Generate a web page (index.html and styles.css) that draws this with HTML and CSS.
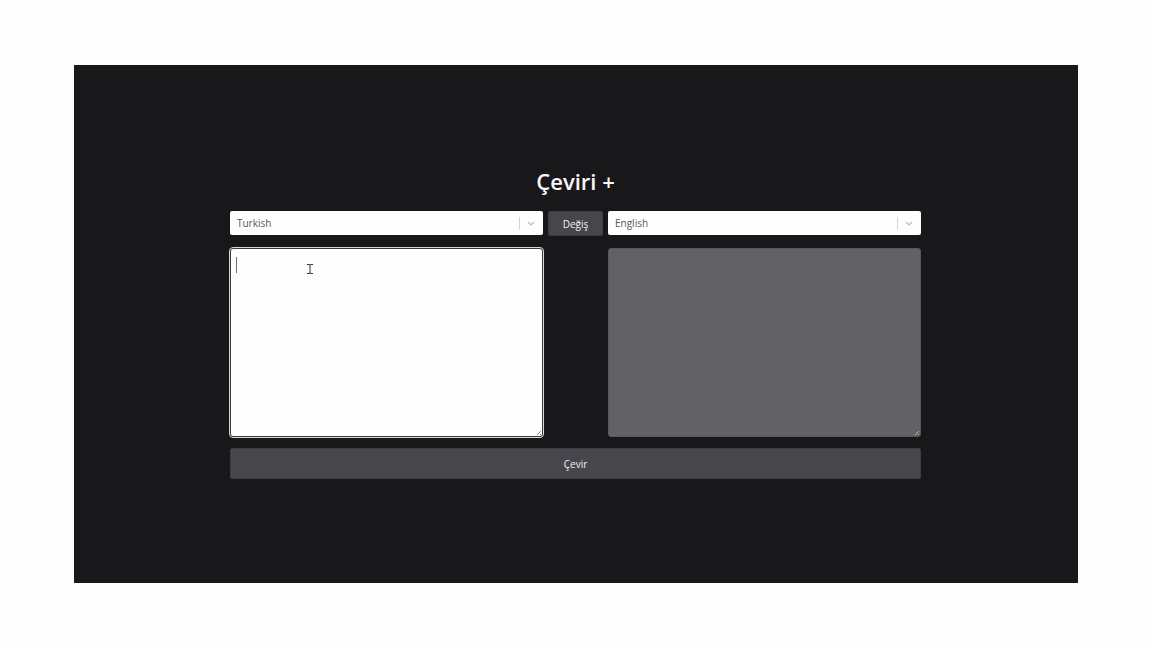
FILE: index.html
```html
<!DOCTYPE html>
<html lang="tr">
<head>
<meta charset="utf-8">
<meta name="viewport" content="width=device-width, initial-scale=1">
<title>Çeviri +</title>
<link rel="stylesheet" href="styles.css">
</head>
<body>
<main class="panel">
  <form class="translator">
    <h1 class="title">Çeviri +</h1>
    <div class="languages">
      <div class="picker">
        <select class="picker-select" aria-label="Kaynak dil">
          <option>Turkish</option>
          <option>English</option>
        </select>
        <svg class="picker-arrow" viewBox="0 0 8 5" aria-hidden="true"><path d="M1 1l3 3 3-3"/></svg>
      </div>
      <button class="button swap" type="button">Değiş</button>
      <div class="picker">
        <select class="picker-select" aria-label="Hedef dil">
          <option>English</option>
          <option>Turkish</option>
        </select>
        <svg class="picker-arrow" viewBox="0 0 8 5" aria-hidden="true"><path d="M1 1l3 3 3-3"/></svg>
      </div>
    </div>
    <div class="texts">
      <div class="field">
        <textarea class="text source" aria-label="Çevrilecek metin"></textarea>
        <span class="caret"></span>
        <svg class="pointer" viewBox="0 0 8 12" aria-hidden="true"><path d="M1 1.5h2l1 .5 1-.5h2M4 2v8M1 10.5h2l1-.5 1 .5h2"/></svg>
        <svg class="grip" viewBox="0 0 6 6" aria-hidden="true"><path d="M1 5l4-4M4 5l1-1"/></svg>
      </div>
      <div class="field">
        <textarea class="text result" aria-label="Çeviri" disabled></textarea>
        <svg class="grip light" viewBox="0 0 6 6" aria-hidden="true"><path d="M1 5l4-4M4 5l1-1"/></svg>
      </div>
    </div>
    <button class="button submit" type="button">Çevir</button>
  </form>
</main>
</body>
</html>
```
FILE: styles.css
```css
* {
  box-sizing: border-box;
}

body {
  margin: 0;
  min-height: 100vh;
  padding: 65px 74px;
  display: flex;
  background: #fdfdfd;
  font-family: "Open Sans", "Noto Sans", sans-serif;
}

.panel {
  flex: 1;
  display: flex;
  justify-content: center;
  align-items: center;
  padding-right: 1px;
  background: #18181a;
}

.translator {
  width: 68.9%;
  display: flex;
  flex-direction: column;
}

.title {
  margin: 0 0 18px;
  color: #f8f8f8;
  font-size: 22px;
  font-weight: 600;
  line-height: 24px;
  text-align: center;
}

.languages {
  display: grid;
  grid-template-columns: 1fr 55px 1fr;
  gap: 5px;
  align-items: start;
}

.picker {
  position: relative;
  display: flex;
}

.picker-select {
  appearance: none;
  flex: 1;
  height: 24px;
  padding: 0 28px 0 7px;
  border: 0;
  border-radius: 2px;
  background: #fefefe linear-gradient(#d4d4d6, #d4d4d6) no-repeat right 23px center / 1px 13px;
  color: #55555a;
  font: 10px/24px "Open Sans", "Noto Sans", sans-serif;
}

.picker-arrow {
  position: absolute;
  top: 10px;
  right: 8px;
  width: 8px;
  height: 5px;
  fill: none;
  stroke: #bcbcc0;
  stroke-width: 1.2;
  pointer-events: none;
}

.button {
  border: 1px solid #3c3c41;
  border-radius: 2px;
  background: #46464c;
  color: #f2f2f4;
  font: 10px/14px "Open Sans", "Noto Sans", sans-serif;
}

.swap {
  height: 25px;
  padding: 0;
}

.texts {
  display: grid;
  grid-template-columns: 1fr 1fr;
  gap: 65px;
  margin: 12px 0 11px;
}

.field {
  position: relative;
  display: flex;
}

.text {
  flex: 1;
  min-width: 0;
  height: 189px;
  padding: 6px;
  border: 1px solid #3a3a3d;
  border-radius: 3px;
  resize: none;
  font: 10px/16px "Open Sans", "Noto Sans", sans-serif;
}

.source {
  background: #fefefe;
  outline: 1px solid #d8d8d8;
}

.result {
  border-color: #58585a;
  background: #626264;
}

.caret {
  position: absolute;
  top: 9px;
  left: 6px;
  width: 1px;
  height: 16px;
  background: #707070;
}

.pointer {
  position: absolute;
  top: 15px;
  left: 76px;
  width: 8px;
  height: 12px;
  fill: none;
  stroke: #333337;
}

.grip {
  position: absolute;
  right: 1px;
  bottom: 1px;
  width: 6px;
  height: 6px;
  fill: none;
  stroke: #8c8c8c;
}

.light {
  stroke: #b8b8b8;
}

.submit {
  height: 31px;
}
```
